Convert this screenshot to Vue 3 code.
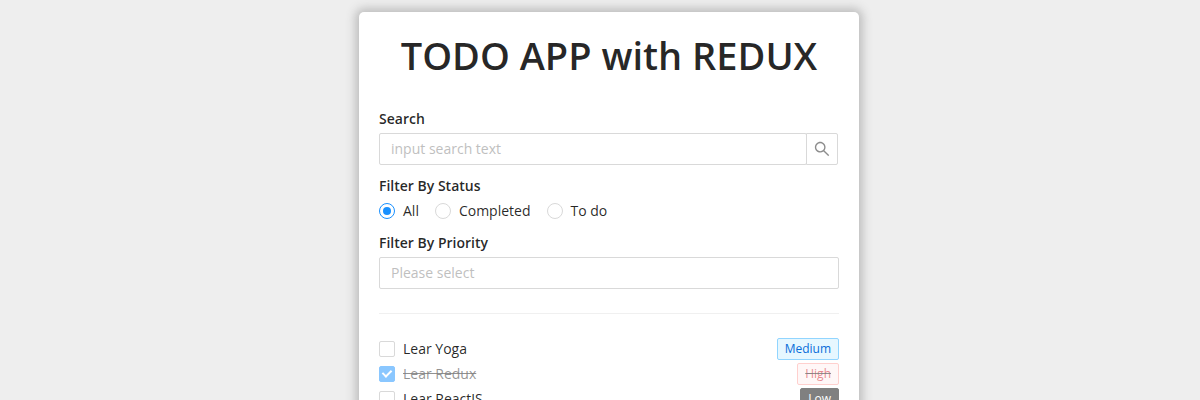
<script setup>
const statuses = ['All', 'Completed', 'To do']
const todos = [
  { name: 'Lear Yoga', priority: 'Medium', done: false },
  { name: 'Lear Redux', priority: 'High', done: true },
  { name: 'Lear ReactJS', priority: 'Low', done: false },
]
</script>

<template>
  <main class="page">
    <section class="card">
      <h1>TODO APP with REDUX</h1>
      <p class="label">Search</p>
      <div class="search">
        <div class="field">input search text</div>
        <button class="search-btn">
          <svg width="16" height="16" viewBox="64 64 896 896" fill="currentColor"><path d="M909.6 854.5L649.9 594.8C690.2 542.7 712 479 712 412c0-80.2-31.3-155.4-87.9-212.1-56.6-56.7-132-87.9-212.1-87.9s-155.5 31.3-212.1 87.9C143.2 256.5 112 331.8 112 412c0 80.1 31.3 155.5 87.9 212.1C256.5 680.8 331.8 712 412 712c67 0 130.6-21.8 182.7-62l259.7 259.6a8.2 8.2 0 0011.6 0l43.6-43.5a8.2 8.2 0 000-11.6zM570.4 570.4C528 612.7 471.8 636 412 636s-116-23.3-158.4-65.6C211.3 528 188 471.8 188 412s23.3-116.1 65.6-158.4C296 211.3 352.2 188 412 188s116.1 23.2 158.4 65.6S636 352.2 636 412s-23.3 116.1-65.6 158.4z" /></svg>
        </button>
      </div>
      <p class="label status-label">Filter By Status</p>
      <div class="radios">
        <label v-for="(s, i) in statuses" :key="s" class="radio">
          <span class="dot" :class="{ on: i === 0 }"></span><span class="radio-text">{{ s }}</span>
        </label>
      </div>
      <p class="label priority-label">Filter By Priority</p>
      <div class="field select">Please select</div>
      <div class="divider"></div>
      <div v-for="t in todos" :key="t.name" class="row" :class="{ done: t.done }">
        <span class="box"></span>
        <span class="name">{{ t.name }}</span>
        <span class="tag" :class="t.priority.toLowerCase()"><span>{{ t.priority }}</span></span>
      </div>
    </section>
  </main>
</template>

<style>
body { background: #eee; overflow: hidden; }
</style>
<style scoped>
.page { height: 400px; overflow: hidden; padding-top: 12px; box-sizing: border-box; font: 14px/22px "Open Sans", sans-serif; color: rgba(0, 0, 0, .85); background: #eee; }
.card { box-sizing: border-box; width: 500px; height: 560px; margin-left: 359px; padding: 20px; background: #fff; border-radius: 5px; box-shadow: 0 0 10px 4px #bfbfbf; }
h1 { margin: 0 0 29px; font-size: 38px; line-height: 47px; font-weight: 600; text-align: center; white-space: nowrap; }
.label { margin: 0 0 3px; font-weight: 600; height: 22px; }
.search { display: flex; }
.field { box-sizing: border-box; height: 32px; border: 1px solid #d9d9d9; border-radius: 2px; padding: 4px 11px; color: #bfbfbf; }
.search .field { width: 428px; }
.search-btn { box-sizing: border-box; width: 32px; height: 32px; margin-left: -1px; padding: 0; border: 1px solid #d9d9d9; border-radius: 0 2px 2px 0; background: #fff; color: rgba(0, 0, 0, .45); display: flex; align-items: center; justify-content: center; }
.status-label { margin-top: 10px; }
.radios { display: flex; gap: 8px; height: 22px; }
.radio { display: flex; align-items: center; }
.radio-text { padding: 0 8px; }
.dot { box-sizing: border-box; width: 16px; height: 16px; border: 1px solid #d9d9d9; border-radius: 50%; display: grid; place-items: center; }
.dot.on { border-color: #1890ff; }
.dot.on::after { content: ""; width: 8px; height: 8px; border-radius: 50%; background: #1890ff; }
.priority-label { margin-top: 10px; }
.divider { height: 1px; background: #f0f0f0; margin: 24px 0; }
.row { display: flex; align-items: center; height: 22px; margin-bottom: 3px; }
.box { position: relative; box-sizing: border-box; width: 16px; height: 16px; border: 1px solid #d9d9d9; border-radius: 2px; }
.name { margin-left: 8px; }
.tag { margin-left: auto; box-sizing: border-box; height: 22px; border: 1px solid; border-radius: 2px; padding: 0 7px; font-size: 12px; line-height: 20px; }
.medium { color: #096dd9; background: #e6f7ff; border-color: #91d5ff; }
.high { color: #cf1322; background: #fff1f0; border-color: #ffa39e; }
.low { color: #fff; background: gray; border-color: gray; }
.done { opacity: .5; text-decoration: line-through; }
.done .box { background: #1890ff; border-color: #1890ff; }
.done .box::after { content: ""; position: absolute; left: 4px; top: 1px; width: 4px; height: 7px; border: solid #fff; border-width: 0 2px 2px 0; transform: rotate(45deg); }
</style>
